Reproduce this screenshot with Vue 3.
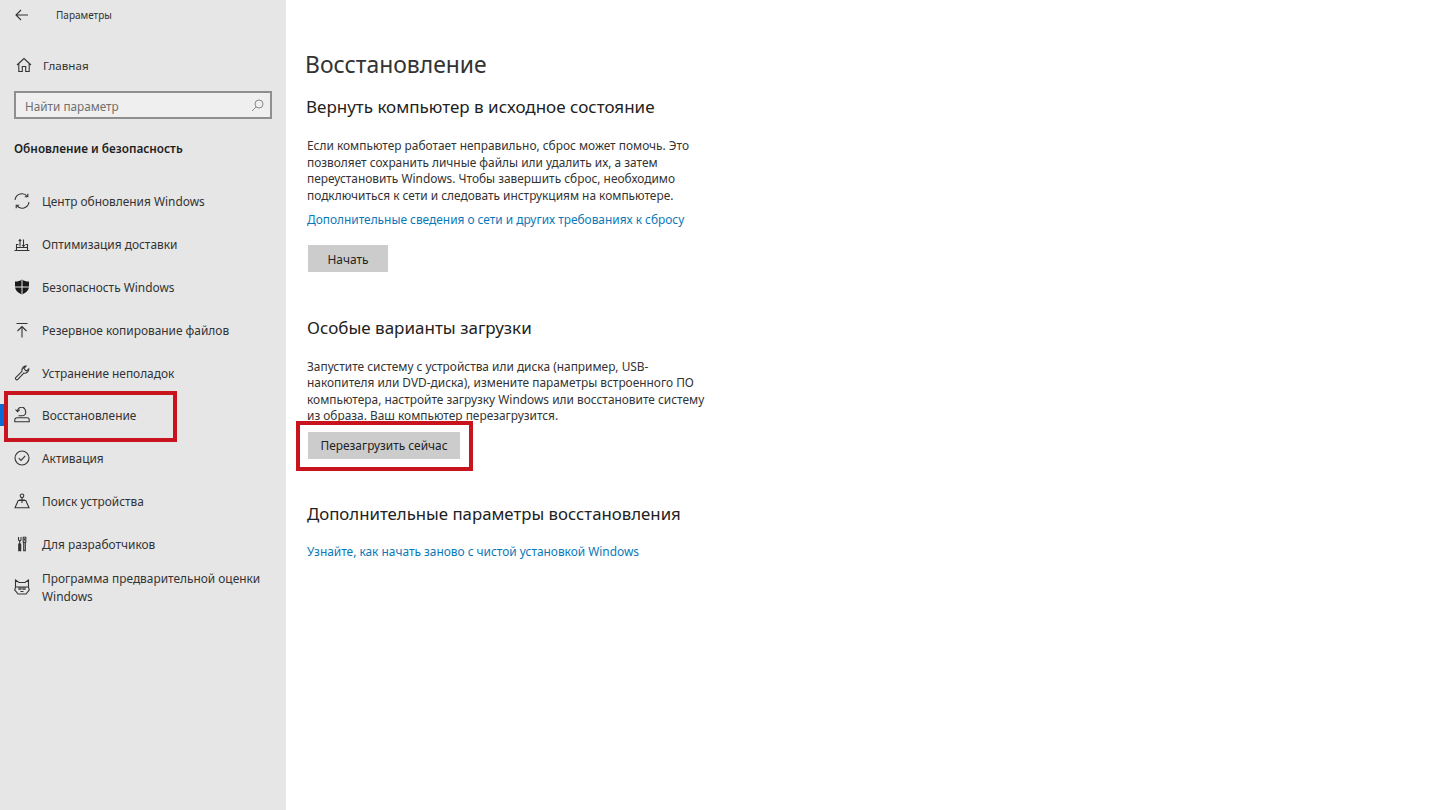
<script setup>
const items = [
  { label: 'Центр обновления Windows', icon: 'sync' },
  { label: 'Оптимизация доставки', icon: 'delivery' },
  { label: 'Безопасность Windows', icon: 'shield' },
  { label: 'Резервное копирование файлов', icon: 'backup' },
  { label: 'Устранение неполадок', icon: 'wrench' },
  { label: 'Восстановление', icon: 'recovery', active: true },
  { label: 'Активация', icon: 'check' },
  { label: 'Поиск устройства', icon: 'find' },
  { label: 'Для разработчиков', icon: 'dev' },
  { label: 'Программа предварительной оценки Windows', icon: 'cat', tall: true },
]
</script>

<template>
  <div class="page">
    <aside class="side">
      <div class="top">
        <svg class="back" width="14" height="12" viewBox="0 0 14 12" fill="none" stroke="#333" stroke-width="1.1"><path d="M13 6H1M6 1 1 6l5 5"/></svg>
        <span class="title">Параметры</span>
      </div>
      <div class="home">
        <svg width="16" height="16" viewBox="0 0 16 16" fill="none" stroke="#333" stroke-width="1.1"><path d="M1 8 8 1.500 15 8M2.800 6.500V14.500H6.300V9.500H9.700V14.500H13.200V6.500"/></svg>
        <span>Главная</span>
      </div>
      <div class="search">
        <span>Найти параметр</span>
        <svg width="13" height="13" viewBox="0 0 13 13" fill="none" stroke="#8a8a8a" stroke-width="1"><circle cx="8" cy="5" r="4"/><path d="M5 8 1 12"/></svg>
      </div>
      <h2 class="group">Обновление и безопасность</h2>
      <nav class="nav">
        <div v-for="it in items" :key="it.label" class="item" :class="{ active: it.active, tall: it.tall }">
          <svg class="ico" width="16" height="16" viewBox="0 0 16 16" fill="none" stroke="#333" stroke-width="1.1">
            <template v-if="it.icon === 'sync'"><path d="M1 6.800A7 7 0 0 1 13.300 3.300M15 9.200A7 7 0 0 1 2.700 12.700"/><path d="M13.800 .8v3h-3M2.200 15.200v-3h3"/></template>
            <template v-else-if="it.icon === 'delivery'"><path d="M.5 14.500h15M2.500 14V8.500h2M13.500 14V8.500h-2M6 10.500V3.500M4.700 5 6 3.500 7.300 5M9.500 10.500V3.500M8.200 9 9.500 10.500 10.800 9M2.500 11.500h11"/></template>
            <template v-else-if="it.icon === 'shield'"><path fill="#1a1a1a" stroke="none" d="M8 .5c2 1.400 4 2 7 2v5C15 11 12 14 8 15.500 4 14 1 11 1 7.500v-5c3 0 5-.6 7-2Z"/><path stroke="#e6e6e6" stroke-width="1" d="M8 .5v15M1 8h14"/></template>
            <template v-else-if="it.icon === 'backup'"><path d="M2.500 1.500h11M8 15.500V4.500M3.500 9 8 4.500 12.500 9"/></template>
            <template v-else-if="it.icon === 'wrench'"><path d="M10.500 1.200c.5-.2 1-.2 1.500-.1L9.800 3.600l2.400 2.500 2.600-2.300c.2 2.500-2.200 4.800-5 4.300l-6.200 6.500c-1 1-2.900-.8-1.900-2l6.300-6.200c-.4-2.200.5-4.100 2.500-5.200Z"/></template>
            <template v-else-if="it.icon === 'recovery'"><path d="M.8 14.800h14.400v-2c0-1.200-.8-2-2-2H3c-1.300 0-2.200.8-2.200 2ZM3.500 4.500A4 4 0 0 1 11.500 4c.8 2.300-.6 4.800-3 4.800H4.500"/><path d="M1.500 2.500 3.500 4.700 5.700 2.700"/></template>
            <template v-else-if="it.icon === 'check'"><circle cx="8" cy="8" r="7"/><path d="M4.800 8.200 7 10.400l4.200-4.500"/></template>
            <template v-else-if="it.icon === 'find'"><circle cx="8" cy="2.800" r="1.800"/><path d="M8 4.600V10M5 7h6M1 14.800 4.200 7.500h7.600l3.200 7.300Z"/></template>
            <template v-else-if="it.icon === 'dev'"><path d="M4.500 1v3l1.200 1.200L7 4V1M5.700 5.200V15M4.700 8h2v6.800h-2ZM9.200 1.200h2.600v5H9.200ZM9.700 6.200h1.600v8.600H9.700ZM10.500 2.500v2"/></template>
            <template v-else><path d="M1.500 1 5 3.500h6L14.500 1v7.500l.8 2.300L12 15H4L.7 10.800l.8-2.300ZM1 8h14M5 7.500v2.800h2V7.500M9 7.500v2.800h2V7.500M6.500 12.500h3"/></template>
          </svg>
          <span class="lbl">{{ it.label }}</span>
        </div>
      </nav>
    </aside>
    <main class="main">
      <h1>Восстановление</h1>
      <section class="sec first">
        <h3>Вернуть компьютер в исходное состояние</h3>
        <p>Если компьютер работает неправильно, сброс может помочь. Это позволяет сохранить личные файлы или удалить их, а затем переустановить Windows. Чтобы завершить сброс, необходимо подключиться к сети и следовать инструкциям на компьютере.</p>
        <a class="link">Дополнительные сведения о сети и других требованиях к сбросу</a>
        <button class="btn start">Начать</button>
      </section>
      <section class="sec second">
        <h3>Особые варианты загрузки</h3>
        <p>Запустите систему с устройства или диска (например, USB-накопителя или DVD-диска), измените параметры встроенного ПО компьютера, настройте загрузку Windows или восстановите систему из образа. Ваш компьютер перезагрузится.</p>
        <span class="mark-wrap">
          <button class="btn restart">Перезагрузить сейчас</button>
          <i class="mark"></i>
        </span>
      </section>
      <section class="sec third">
        <h3>Дополнительные параметры восстановления</h3>
        <a class="link">Узнайте, как начать заново с чистой установкой Windows</a>
      </section>
    </main>
  </div>
</template>

<style>
html, body { margin: 0; background: #fff; }
</style>

<style scoped>
.page { display: flex; width: 1440px; height: 810px; overflow: hidden; font-family: "Noto Sans", "Open Sans", sans-serif; color: #1f1f1f; background: #fff; }
.side { width: 286px; flex: none; background: #e6e6e6; display: flex; flex-direction: column; }
.top { display: flex; align-items: center; height: 30px; padding-left: 15px; }
.back { margin-right: 27px; }
.title { font-size: 10px; color: #333; }
.home { display: flex; align-items: center; gap: 11px; margin-top: 25px; padding-left: 16px; height: 20px; font-size: 11.600px; color: #333; }
.search { box-sizing: border-box; display: flex; align-items: center; justify-content: space-between; margin: 16px 14px 0 14px; height: 28px; padding: 1px 6px 0 9px; border: 2px solid #8f8f8f; background: #efefef; font-size: 11.750px; color: #6f6f6f; }
.group { margin: 19px 0 0 14px; font-size: 11.800px; font-weight: 600; line-height: 20px; color: #1f1f1f; }
.nav { display: flex; flex-direction: column; margin-top: 21.600px; }
.item { position: relative; display: flex; align-items: center; height: 42.900px; padding-left: 14px; font-size: 11.900px; color: #333; }
.item.tall { line-height: 18px; }
.item.active::before { content: ""; position: absolute; left: 0; top: 10px; width: 4px; height: 22px; background: #0a6cd0; }
.item.active::after { content: ""; position: absolute; box-sizing: border-box; left: 4px; top: -3.500px; width: 173px; height: 51px; border: 4px solid #c8141c; }
.ico { flex: none; margin-right: 12px; }
.lbl { max-width: 225px; }
.main { flex: 1; padding: 0 0 0 19px; }
h1 { margin: 47px 0 0; font-size: 22.900px; font-weight: 400; line-height: 36px; color: #333; }
h3 { margin: 0; font-size: 17px; font-weight: 400; line-height: 24px; color: #222; }
.sec { width: 400px; padding-left: 2px; display: flex; flex-direction: column; align-items: flex-start; }
.first { margin-top: 12px; }
.first h3 { margin-left: -1px; }
.second { margin-top: 44px; }
.third { margin-top: 43px; }
.third h3 { font-size: 16.800px; }
p { margin: 18px 0 0; font-size: 11.900px; line-height: 16.500px; color: #333; }
.link { margin-top: 6.700px; font-size: 11.900px; line-height: 18px; color: #0a78b8; }
.btn { border: 0; padding: 0; font: inherit; font-size: 11.900px; background: #cccccc; color: #222; height: 27px; }
.start { margin: 17px 0 0 1px; width: 80px; padding-top: 1px; }
.mark-wrap { position: relative; display: block; margin: 8.700px 0 0 1px; }
.restart { display: block; width: 152px; padding-bottom: 1px; }
.mark { position: absolute; box-sizing: border-box; left: -12px; top: -11px; width: 177px; height: 50px; border: 4px solid #c8141c; }
.third .link { margin-top: 16px; }
</style>
